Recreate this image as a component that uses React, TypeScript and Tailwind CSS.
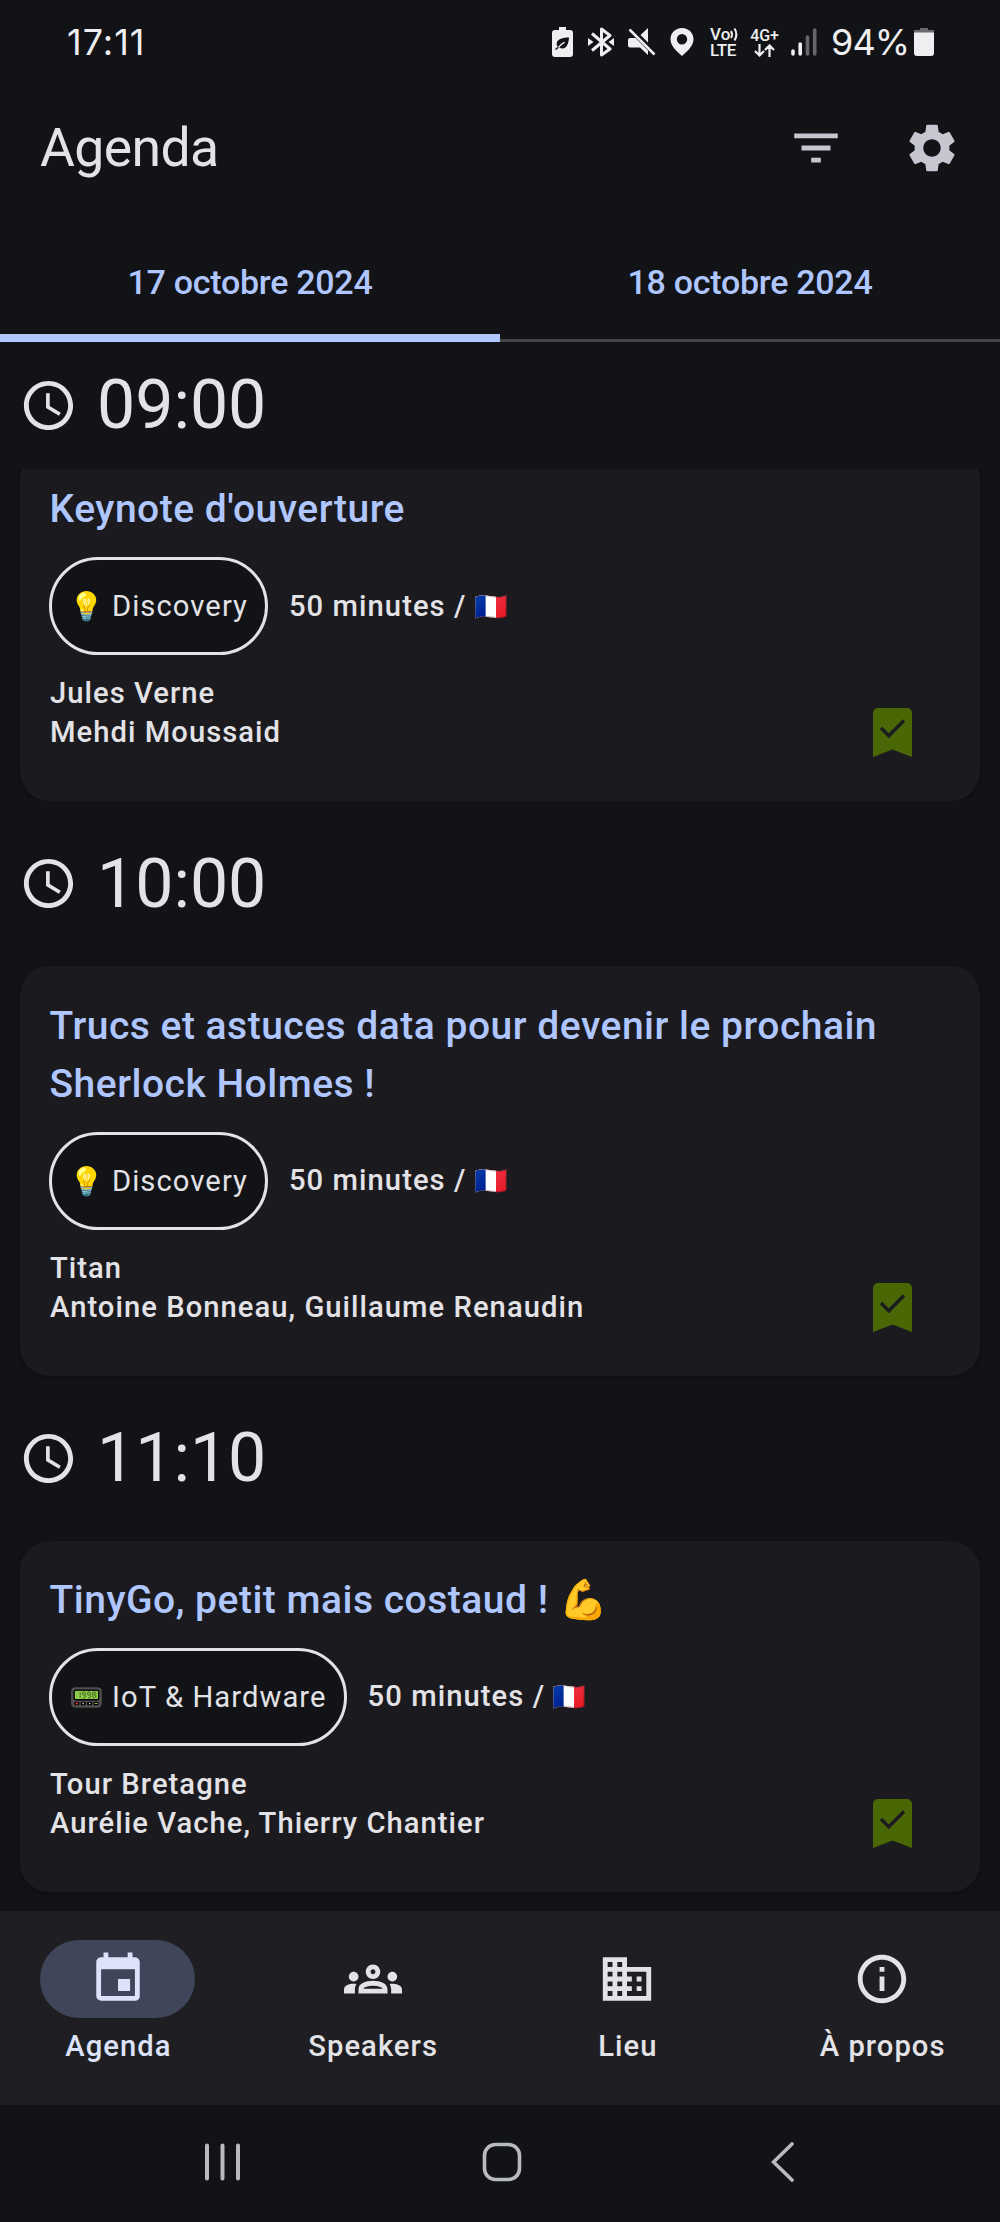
import type { ReactNode } from "react";
import {
  MdDomain,
  MdEvent,
  MdFilterList,
  MdInfoOutline,
  MdOutlineGroups,
  MdSchedule,
  MdSettings,
} from "react-icons/md";

type Talk = {
  title: string;
  emoji: string;
  category: string;
  room: string;
  speakers: string;
};

const talks: Record<string, Talk> = {
  "09:00": {
    title: "Keynote d'ouverture",
    emoji: "💡",
    category: "Discovery",
    room: "Jules Verne",
    speakers: "Mehdi Moussaid",
  },
  "10:00": {
    title: "Trucs et astuces data pour devenir le prochain Sherlock Holmes !",
    emoji: "💡",
    category: "Discovery",
    room: "Titan",
    speakers: "Antoine Bonneau, Guillaume Renaudin",
  },
  "11:10": {
    title: "TinyGo, petit mais costaud ! 💪",
    emoji: "📟",
    category: "IoT & Hardware",
    room: "Tour Bretagne",
    speakers: "Aurélie Vache, Thierry Chantier",
  },
};

function StatusBar() {
  return (
    <div className="flex h-[84px] shrink-0 items-center justify-between pl-[67px] pr-[66px] font-['Inter',sans-serif] text-[#efeff1]">
      <span className="text-[36px] tracking-[1px]">17:11</span>
      <div className="flex items-center">
        <svg className="mr-[15px] h-[30px] w-[21px]" viewBox="0 0 21 30" fill="currentColor">
          <path
            fillRule="evenodd"
            d="M7 0h7v3h4a3 3 0 0 1 3 3v21a3 3 0 0 1-3 3H3a3 3 0 0 1-3-3V6a3 3 0 0 1 3-3h4zM17 10.500C9 10.500 4.500 13 4.700 17c0 1.200.5 2 1.200 2.700L3 22l1 1 3.200-2.400C13 23.500 16.500 19 17 10.500z"
          />
          <path d="M6.500 20.500C8 17.500 10 16.500 12.500 15.200" fill="none" stroke="currentColor" strokeWidth="1.400" />
        </svg>
        <svg className="mr-[14px] h-[30px] w-[26px]" viewBox="0 0 26 30" fill="none" stroke="currentColor" strokeWidth="3" strokeLinejoin="round">
          <path d="M4 6.500 22 22l-8.500 6V2L22 8.500 4 23.500" />
          <path d="m0 11 5.500 4L0 19zM26 11l-5.500 4 5.500 4z" fill="currentColor" stroke="none" />
        </svg>
        <svg className="mr-[14px] h-[28px] w-[28px]" viewBox="0 0 28 28" fill="currentColor">
          <path d="M20 0v14.500L12.500 7zM0 12a2 2 0 0 1 2-2h5.500L20 22.500V27l-8-7.500H2a2 2 0 0 1-2-2z" />
          <path d="M1.500 1.500 26.500 26.500" stroke="currentColor" strokeWidth="2.500" />
        </svg>
        <svg className="mr-[16px] h-[28px] w-[24px]" viewBox="0 0 24 28" fill="currentColor">
          <path fillRule="evenodd" d="M12 0C5.300 0 .5 5 .5 11.200.5 18.500 8 24 12 28c4-4 11.500-9.500 11.500-16.800C23.500 5 18.700 0 12 0zm0 6a5.200 5.200 0 1 1 0 10.400A5.200 5.200 0 0 1 12 6z" />
        </svg>
        <div className="mr-[9px] flex w-[31px] flex-col font-['Roboto',sans-serif] text-[17px] font-medium leading-[16px]">
          <span className="flex items-center">
            Vo
            <svg className="h-[15px] w-[10px]" viewBox="0 0 10 15" fill="none" stroke="currentColor" strokeWidth="2">
              <path d="M1 4q2 3.500 0 7M4.500 1.500q3.700 6 0 12" />
            </svg>
          </span>
          <span className="tracking-[-0.4px]">LTE</span>
        </div>
        <div className="mr-[12px] flex w-[29px] flex-col items-center font-['Roboto',sans-serif] text-[16px] font-medium leading-[17px]">
          4G+
          <svg className="h-[13px] w-[21px]" viewBox="0 0 21 13" fill="none" stroke="currentColor" strokeWidth="2.200">
            <path d="M5.500 0v11.500M1 7l4.500 4.500L10 7M15.500 13V1.500M11 6l4.500-4.500L20 6" />
          </svg>
        </div>
        <svg className="mr-[14px] h-[28px] w-[26px]" viewBox="0 0 26 28" stroke="currentColor" strokeWidth="3.600" strokeLinecap="round">
          <path d="M2 23v3M9.200 16v10" />
          <path d="M16.500 9v17M23.700 2v24" opacity=".38" />
        </svg>
        <span className="mr-[5px] text-[36px] tracking-[-1px]">94%</span>
        <svg className="h-[28px] w-[20px]" viewBox="0 0 20 28" fill="currentColor">
          <path d="M6 0h8v2h6v3H0V2h6z" opacity=".4" />
          <path d="M0 4.500h20V25a3 3 0 0 1-3 3H3a3 3 0 0 1-3-3z" />
        </svg>
      </div>
    </div>
  );
}

function TimeHeader({ time, sticky = false }: { time: string; sticky?: boolean }) {
  return (
    <div className={`flex shrink-0 items-center pl-[19px] text-[#e3e2e6] ${sticky ? "h-[127px] pb-[2px]" : "h-[165px]"}`}>
      <MdSchedule className={`size-[59px] ${sticky ? "mt-[2px]" : ""}`} />
      <span className="ml-[19px] text-[68px] leading-none">{time}</span>
    </div>
  );
}

function Bookmark() {
  return (
    <svg className="absolute bottom-[44px] right-[68px] h-[49px] w-[39px]" viewBox="0 0 39 49">
      <path d="M5 0h29a5 5 0 0 1 5 5v44l-19.500-7.500L0 49V5a5 5 0 0 1 5-5z" fill="#4a6705" />
      <path d="m8 20 7.800 7.800L31 12.500" fill="none" stroke="#1b1b1f" strokeWidth="3.400" />
    </svg>
  );
}

function TalkCard({ talk }: { talk: Talk }) {
  return (
    <div className="relative mx-[20px] shrink-0 rounded-[29px] bg-[#1b1b1f] px-[29px] pb-[49px] pt-[30.500px] shadow-[0_1px_4px_rgba(0,0,0,0.35)]">
      <h2 className="pl-[0.500px] text-[39px] font-medium leading-[58.300px] tracking-[0.500px] text-[#b0c6ff]">{talk.title}</h2>
      <div className="mt-[18.500px] flex items-center text-[29.200px] leading-[39px] tracking-[1.060px] text-[#e3e2e6]">
        <span className="flex h-[98px] items-center rounded-full border-[3px] border-[#e3e2e6] bg-[#111317] pl-[17px] pr-[17px] pt-[1px]">
          <span className="mr-[9px] w-[34px] text-[28px] tracking-[0px]">{talk.emoji}</span>
          {talk.category}
        </span>
        <span className="ml-[21px] pt-[1px] font-medium">
          50 minutes / <span className="-ml-[1px] text-[27px] tracking-[0px]">🇫🇷</span>
        </span>
      </div>
      <div className="mt-[19px] pl-[1px] text-[29.200px] font-medium leading-[39px] tracking-[1.040px] text-[#e3e2e6]">
        <p>{talk.room}</p>
        <p>{talk.speakers}</p>
      </div>
      <Bookmark />
    </div>
  );
}

function NavItem({ icon, label, active = false }: { icon: ReactNode; label: string; active?: boolean }) {
  return (
    <div className={`flex flex-1 flex-col items-center pt-[29px] ${active ? "text-[#dce2f9]" : "text-[#e3e2e6]"}`}>
      <div className={`flex h-[78px] w-[155px] items-center justify-center rounded-full text-[58px] ${active ? "bg-[#404659]" : ""}`}>
        {icon}
      </div>
      <span className="mt-[9px] pl-[1px] text-[29.200px] font-medium leading-[39px] tracking-[1.040px]">{label}</span>
    </div>
  );
}

export default function App() {
  return (
    <div className="flex h-[2222px] w-[1000px] flex-col overflow-hidden bg-[#111317] font-['Roboto',sans-serif]">
      <StatusBar />
      <header className="flex h-[127px] shrink-0 items-center justify-between pl-[40px] pr-[39px]">
        <h1 className="text-[53.500px] leading-none tracking-[-0.600px] text-[#e3e2e6]">Agenda</h1>
        <div className="flex items-center gap-[58px] text-[58px] text-[#c5c6d0]">
          <MdFilterList />
          <MdSettings />
        </div>
      </header>
      <div className="grid h-[131px] shrink-0 grid-cols-2 text-center text-[34px] font-medium leading-[49px] tracking-[-0.280px] text-[#b0c6ff]">
        <div className="border-b-[8px] border-[#b0c6ff] pt-[47px]">17 octobre 2024</div>
        <div className="flex flex-col justify-between pt-[47px]">
          18 octobre 2024
          <div className="h-[3px] bg-[#444448]" />
        </div>
      </div>
      <main className="flex h-[1569px] shrink-0 flex-col overflow-hidden">
        <TimeHeader time="09:00" sticky />
        <div className="flex h-[332px] shrink-0 flex-col justify-end overflow-hidden">
          <TalkCard talk={talks["09:00"]} />
        </div>
        <TimeHeader time="10:00" />
        <TalkCard talk={talks["10:00"]} />
        <TimeHeader time="11:10" />
        <TalkCard talk={talks["11:10"]} />
      </main>
      <nav className="flex h-[194px] shrink-0 gap-[19px] bg-[#1f1f23]">
        <NavItem icon={<MdEvent />} label="Agenda" active />
        <NavItem icon={<MdOutlineGroups />} label="Speakers" />
        <NavItem icon={<MdDomain />} label="Lieu" />
        <NavItem icon={<MdInfoOutline />} label="À propos" />
      </nav>
      <div className="flex h-[117px] shrink-0 items-center pb-[4px] pl-[205px] text-[#b9babd]">
        <svg className="h-[38px] w-[35px]" viewBox="0 0 35 38" stroke="currentColor" strokeWidth="4" strokeLinecap="round">
          <path d="M2 2.500v33M17.500 2.500v33M33 2.500v33" />
        </svg>
        <svg className="ml-[242px] h-[40px] w-[40px]" viewBox="0 0 40 40" fill="none" stroke="currentColor" strokeWidth="3.600">
          <rect x="2.500" y="2.500" width="35" height="35" rx="11" />
        </svg>
        <svg className="ml-[249px] h-[40px] w-[23px]" viewBox="0 0 23 40" fill="none" stroke="currentColor" strokeWidth="3.600" strokeLinecap="round">
          <path d="M21 2 2.500 20 21 38" />
        </svg>
      </div>
    </div>
  );
}
